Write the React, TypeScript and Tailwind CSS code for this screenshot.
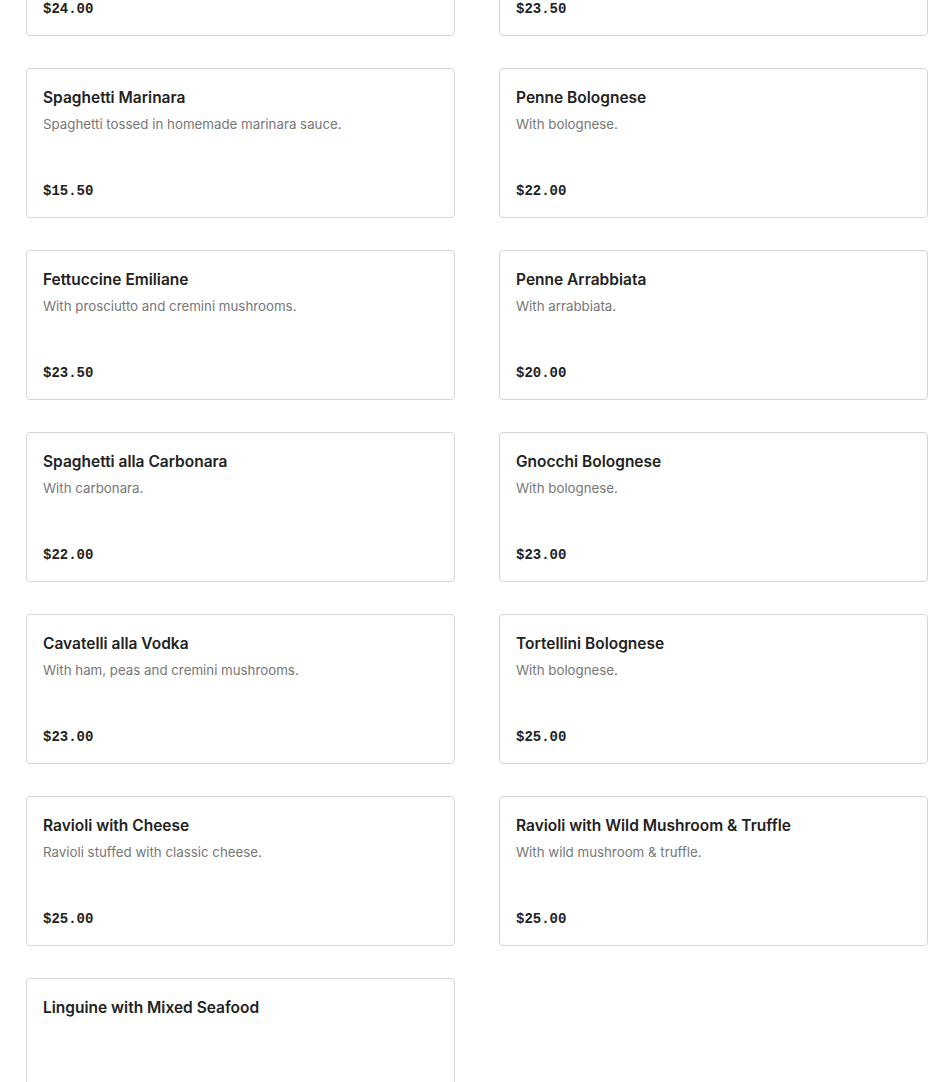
interface MenuItem {
	name: string;
	description?: string;
	price?: string;
}

const items: MenuItem[] = [
	{ name: 'Fettuccine Alfredo', description: 'With cream sauce.', price: '$24.00' },
	{ name: 'Rigatoni', description: 'With vodka sauce.', price: '$23.50' },
	{
		name: 'Spaghetti Marinara',
		description: 'Spaghetti tossed in homemade marinara sauce.',
		price: '$15.50',
	},
	{ name: 'Penne Bolognese', description: 'With bolognese.', price: '$22.00' },
	{
		name: 'Fettuccine Emiliane',
		description: 'With prosciutto and cremini mushrooms.',
		price: '$23.50',
	},
	{ name: 'Penne Arrabbiata', description: 'With arrabbiata.', price: '$20.00' },
	{ name: 'Spaghetti alla Carbonara', description: 'With carbonara.', price: '$22.00' },
	{ name: 'Gnocchi Bolognese', description: 'With bolognese.', price: '$23.00' },
	{
		name: 'Cavatelli alla Vodka',
		description: 'With ham, peas and cremini mushrooms.',
		price: '$23.00',
	},
	{ name: 'Tortellini Bolognese', description: 'With bolognese.', price: '$25.00' },
	{
		name: 'Ravioli with Cheese',
		description: 'Ravioli stuffed with classic cheese.',
		price: '$25.00',
	},
	{
		name: 'Ravioli with Wild Mushroom & Truffle',
		description: 'With wild mushroom & truffle.',
		price: '$25.00',
	},
	{ name: 'Linguine with Mixed Seafood' },
];

function MenuCard({ name, description, price }: MenuItem) {
	return (
		<article className="flex h-[150px] flex-col rounded-[4px] border border-[#d6d6d6] bg-white px-4 pt-[17px] pb-4">
			<h3 className="text-[15.5px] leading-6 font-semibold text-[#222222]">{name}</h3>
			{description && (
				<p className="mt-[4px] text-[13.3px] leading-5 text-[#777777]">{description}</p>
			)}
			{price && (
				<p className="mt-auto font-['Liberation_Mono',monospace] text-[14px] leading-5 font-bold text-[#222222]">
					{price}
				</p>
			)}
		</article>
	);
}

export default function App() {
	return (
		<div className="h-[1082px] overflow-hidden bg-white font-['Inter',sans-serif]">
			<div className="-mt-[114px] grid grid-cols-[429px_429px] gap-x-[44px] gap-y-8 pl-[26px]">
				{items.map((item) => (
					<MenuCard key={item.name} {...item} />
				))}
			</div>
		</div>
	);
}
